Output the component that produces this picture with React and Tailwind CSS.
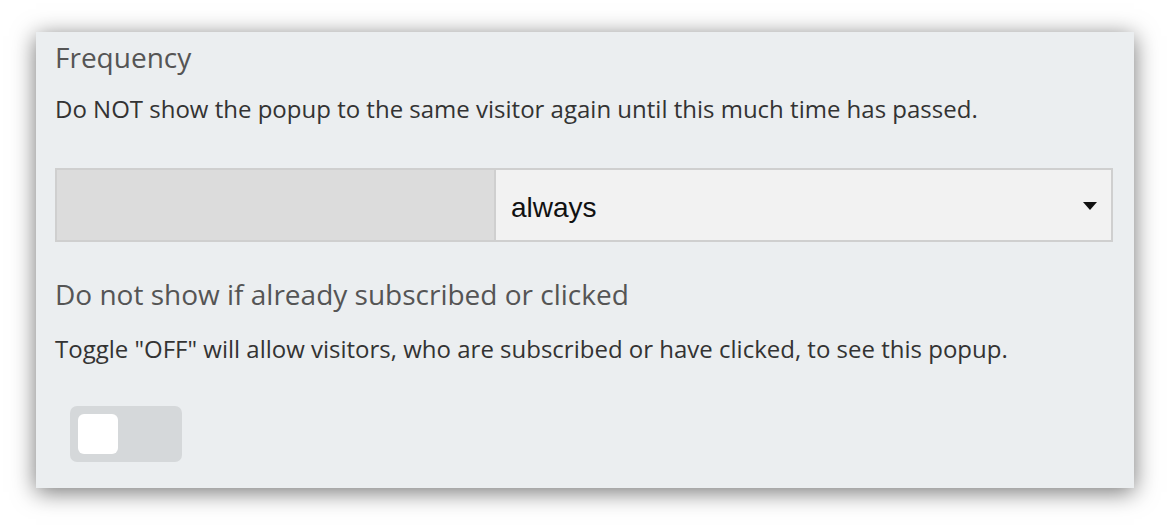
export default function App() {
  return (
    <div className="w-[1170px] h-[528px] bg-white pt-[32px] pl-[36px]" style={{ fontFamily: '"Open Sans", sans-serif' }}>
      <div className="w-[1098px] h-[456px] bg-[#ebeef0] shadow-[0_4px_22px_rgba(0,0,0,0.55)] pl-[19px] pr-[21px] pt-[8px]">
        <h2 className="text-[28px] leading-[34px] text-[#555]">Frequency</h2>
        <p className="mt-[21px] text-[24px] leading-[28px] text-[#333]">
          Do NOT show the popup to the same visitor again until this much time has passed.
        </p>

        <div className="mt-[45px] flex h-[74px] border-2 border-[#cfcfcf]">
          <div className="w-[439px] bg-[#dcdcdc] border-r-2 border-[#cfcfcf]" />
          <div className="flex-1 bg-[#f2f2f2] flex items-center justify-between pl-[15px] pr-[14px]">
            <span className="pt-[5px] text-[28px] text-[#111]" style={{ fontFamily: '"Liberation Sans", Arial, sans-serif' }}>always</span>
            <svg width="14" height="8" viewBox="0 0 14 8" className="mt-[2px]">
              <path d="M0 0h14L7 8z" fill="#111" />
            </svg>
          </div>
        </div>

        <h2 className="mt-[35px] text-[28px] leading-[34px] text-[#555]">Do not show if already subscribed or clicked</h2>
        <p className="mt-[24px] text-[24px] leading-[28px] text-[#333]">
          Toggle "OFF" will allow visitors, who are subscribed or have clicked, to see this popup.
        </p>

        <div className="mt-[43px] ml-[15px] w-[112px] h-[56px] rounded-[7px] bg-[#d5d8da] p-[8px]">
          <div className="w-[40px] h-[40px] rounded-[6px] bg-white" />
        </div>
      </div>
    </div>
  );
}
